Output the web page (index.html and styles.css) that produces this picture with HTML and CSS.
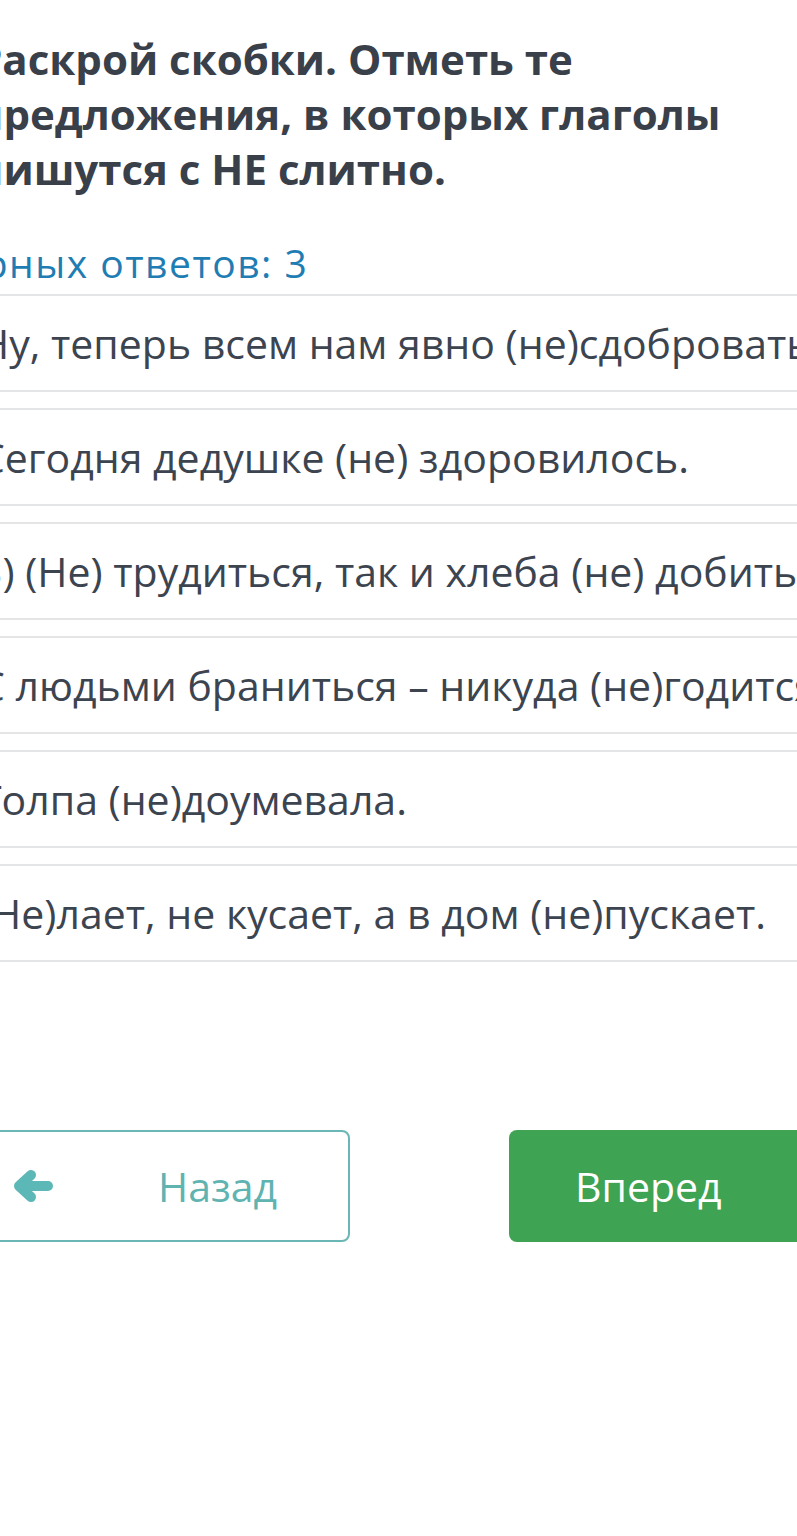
FILE: index.html
```html
<!DOCTYPE html>
<html lang="ru">
<head>
    <meta charset="UTF-8">
    <meta name="viewport" content="width=device-width, initial-scale=1.0">
    <title>Задание</title>
    <link rel="stylesheet" href="styles.css">
</head>
<body>
    <div class="page">
        <h1 class="question">Раскрой скобки. Отметь те предложения, в которых глаголы пишутся с НЕ слитно.</h1>

        <p class="count">Количество верных ответов: 3</p>

        <div class="options">
            <div class="option">Ну, теперь всем нам явно (не)сдобровать.</div>
            <div class="option">Сегодня дедушке (не) здоровилось.</div>
            <div class="option">3) (Не) трудиться, так и хлеба (не) добиться.</div>
            <div class="option">С людьми браниться – никуда (не)годится.</div>
            <div class="option">Толпа (не)доумевала.</div>
            <div class="option">(Не)лает, не кусает, а в дом (не)пускает.</div>
        </div>

        <div class="nav">
            <button class="btn btn-back">
                <svg class="arrow" width="42" height="36" viewBox="0 0 42 36">
                    <path d="M36 18 H9 M19 7 L7 18 L19 29" fill="none" stroke="#5bb8b6" stroke-width="10" stroke-linecap="round" stroke-linejoin="round"/>
                </svg>
                <span>Назад</span>
            </button>
            <button class="btn btn-next">Вперед</button>
        </div>
    </div>
</body>
</html>
```

FILE: styles.css
```css
html, body {
    margin: 0;
    padding: 0;
    background: #fff;
    overflow: hidden;
}
body {
    font-family: "Open Sans", "Noto Sans", sans-serif;
    color: #3c4450;
}
.page {
    width: 900px;
    margin-left: -24px;
    padding-top: 31px;
}
.question {
    font-size: 42px;
    font-weight: 700;
    line-height: 55px;
    margin: 0;
    width: 800px;
    color: #394049;
}
.count {
    font-size: 39px;
    letter-spacing: 1.5px;
    line-height: 50px;
    color: #1f7db3;
    white-space: nowrap;
    margin: 42px 0 0 -289px;
}
.options {
    display: flex;
    flex-direction: column;
    gap: 16px;
    margin-top: 6px;
}
.option {
    height: 94px;
    padding-left: 3px;
    border-top: 2px solid #e4e5e6;
    border-bottom: 2px solid #e4e5e6;
    display: flex;
    align-items: center;
    font-size: 41px;
    white-space: nowrap;
}
.nav {
    display: flex;
    gap: 159px;
    margin-top: 168px;
}
.btn {
    flex-shrink: 0;
    height: 112px;
    border-radius: 8px;
    font-family: "Open Sans", "Noto Sans", sans-serif;
    font-size: 41px;
    display: flex;
    align-items: center;
    box-sizing: border-box;
}
.btn-back {
    width: 374px;
    background: #fff;
    border: 2px solid #6ab7b5;
    color: #5fb3b1;
    padding: 0 0 0 34px;
}
.btn-back span {
    margin-left: 104px;
}
.btn-next {
    width: 360px;
    background: #3ea353;
    border: none;
    color: #fff;
    padding: 0 0 0 66px;
}
```
